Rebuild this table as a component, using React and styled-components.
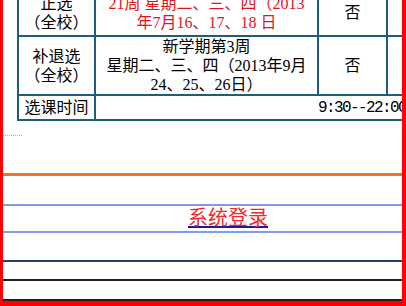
import styled, { createGlobalStyle } from "styled-components";

const GlobalStyle = createGlobalStyle`
  html, body {
    margin: 0;
    padding: 0;
    overflow: hidden;
    background: #ffffff;
  }
`;

const Frame = styled.div`
  width: 406px;
  height: 306px;
  box-sizing: border-box;
  border-left: 3px solid #ff0000;
  border-right: 4px solid #ff0000;
  border-bottom: 5px solid #ff0000;
  overflow: hidden;
  background: #ffffff;
  font-family: "Liberation Serif", "Noto Sans CJK SC", serif;
  font-size: 16px;
  color: #000000;
`;

const Page = styled.div`
  width: 450px;
  display: flex;
  flex-direction: column;
  margin-top: -12px;
`;

const ScheduleTable = styled.table`
  margin-left: 14px;
  width: 391px;
  border-collapse: collapse;
  table-layout: fixed;
`;

const Cell = styled.td`
  border: 2px solid #1b5f7b;
  padding: 0;
  height: ${(p) => p.$h}px;
  line-height: 19px;
  text-align: ${(p) => p.$align || "center"};
  vertical-align: middle;
  color: ${(p) => (p.$red ? "#e0161e" : "#000000")};
  white-space: nowrap;
  overflow: hidden;
`;

const Time = styled.span`
  font-family: "Liberation Mono", monospace;
  letter-spacing: -1.6px;
  padding-right: 2px;
`;

const DotMark = styled.div`
  width: 19px;
  margin-top: 14px;
  border-top: 1px dotted #9bb4d4;
`;

const Rule = styled.div`
  margin-top: ${(p) => p.$gap}px;
  height: ${(p) => p.$size}px;
  background: ${(p) => p.$color};
`;

const LoginBar = styled.div`
  height: 25px;
  display: flex;
  justify-content: center;
  align-items: flex-start;
`;

const LoginLink = styled.a`
  font-family: "Noto Sans CJK SC", sans-serif;
  font-size: 20px;
  line-height: 21px;
  color: #1a1aa0;
  text-decoration: underline;
  cursor: pointer;
`;

const LoginText = styled.span`
  color: #f0282c;
`;

export default function App() {
  return (
    <>
      <GlobalStyle />
      <Frame>
        <Page>
          <ScheduleTable>
            <colgroup>
              <col style={{ width: 77 }} />
              <col style={{ width: 223 }} />
              <col style={{ width: 69 }} />
              <col style={{ width: 22 }} />
            </colgroup>
            <tbody>
              <tr>
                <Cell $h={45}>
                  正选
                  <br />
                  （全校）
                </Cell>
                <Cell $h={45} $red>
                  21周 星期二、三、四（2013
                  <br />
                  年7月16、17、18 日
                </Cell>
                <Cell $h={45}>否</Cell>
                <Cell $h={45}></Cell>
              </tr>
              <tr>
                <Cell $h={57}>
                  补退选
                  <br />
                  （全校）
                </Cell>
                <Cell $h={57}>
                  新学期第3周
                  <br />
                  星期二、三、四（2013年9月
                  <br />
                  24、25、26日）
                </Cell>
                <Cell $h={57}>否</Cell>
                <Cell $h={57}></Cell>
              </tr>
              <tr>
                <Cell $h={23}>选课时间</Cell>
                <Cell $h={23} colSpan={3} $align="right">
                  <Time>9:30--22:00</Time>
                </Cell>
              </tr>
            </tbody>
          </ScheduleTable>
          <DotMark />
          <Rule $gap={37} $size={3} $color="#f07222" />
          <Rule $gap={28} $size={2} $color="#7d9cf0" />
          <LoginBar>
            <LoginLink>
              <LoginText>系统登录</LoginText>
            </LoginLink>
          </LoginBar>
          <Rule $gap={0} $size={2} $color="#7d9cf0" />
          <Rule $gap={27} $size={2} $color="#2a3d5e" />
          <Rule $gap={17} $size={2} $color="#222222" />
          <Rule $gap={18} $size={2} $color="#222222" />
        </Page>
      </Frame>
    </>
  );
}
